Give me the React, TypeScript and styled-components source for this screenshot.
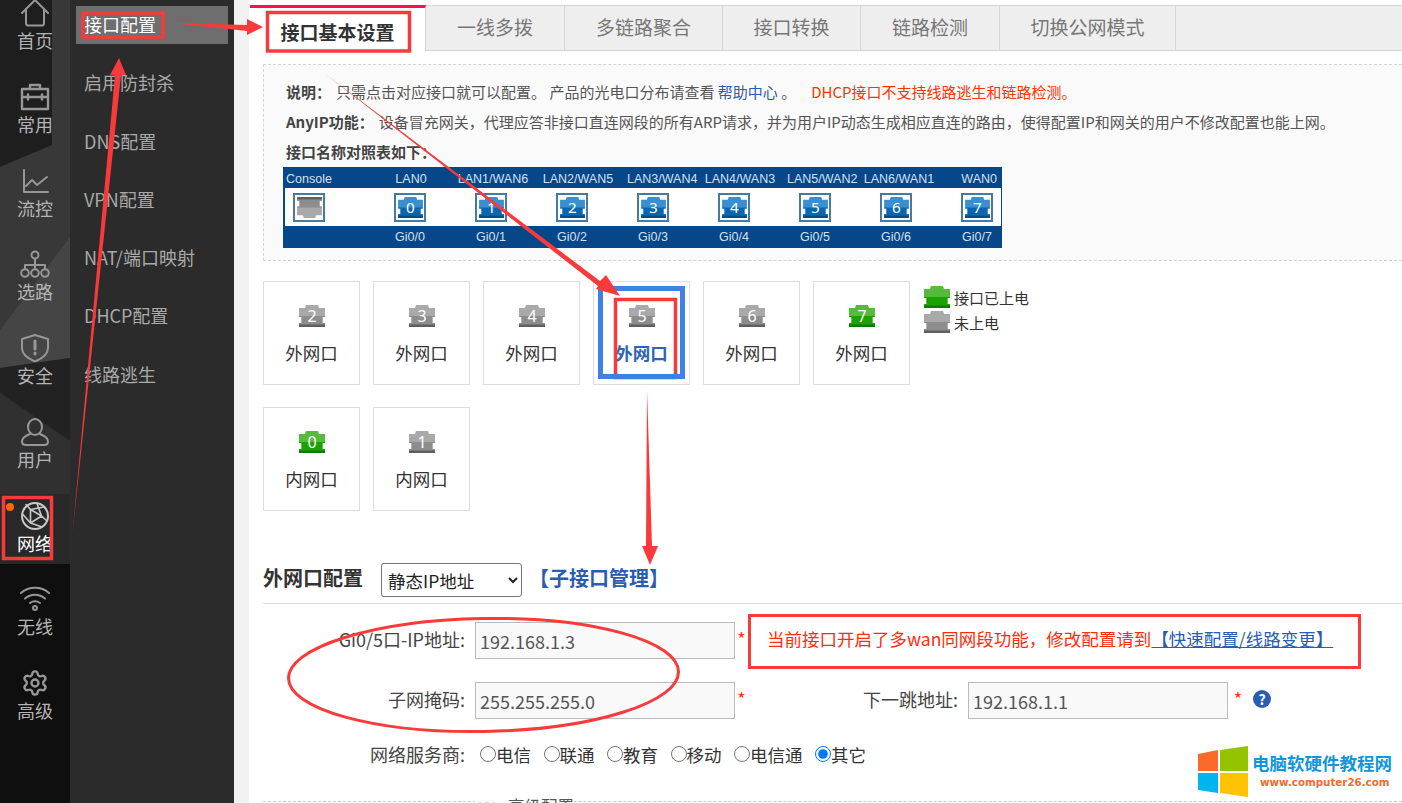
import { ReactNode } from "react";
import styled, { createGlobalStyle } from "styled-components";
import { Settings } from "lucide-react";

const FONT = `"Noto Sans CJK SC", "Noto Sans", sans-serif`;
const RED = "#f83a3a";

const Global = createGlobalStyle`
  html, body { margin: 0; padding: 0; background: #fff; }
  body { font-family: ${FONT}; color: #333; }
  * { box-sizing: border-box; }
`;

const Page = styled.div`
  position: relative;
  display: flex;
  width: 1402px;
  height: 803px;
  overflow: hidden;
`;

/* ---------- icon rail ---------- */
const Rail = styled.nav`
  position: relative;
  flex: 0 0 70px;
  height: 803px;
  background: #0f0f0f;
`;

const RailArt = styled.svg`
  position: absolute;
  inset: 0;
`;

const RailList = styled.ul`
  position: relative;
  display: flex;
  flex-direction: column;
  gap: 13.75px;
  margin: -9px 0 0;
  padding: 0;
  list-style: none;
`;

const RailItem = styled.li<{ $active?: boolean }>`
  position: relative;
  display: flex;
  flex-direction: column;
  align-items: center;
  height: 70px;
  padding-top: 8px;
  color: ${(p) => (p.$active ? "#fff" : "#b4b4b4")};
  background: ${(p) => (p.$active ? "#282828" : "transparent")};
  svg {
    width: 30px;
    height: 28px;
    fill: none;
    stroke: ${(p) => (p.$active ? "#c8c8c8" : "#979797")};
    stroke-width: 2;
    stroke-linecap: round;
    stroke-linejoin: round;
  }
`;

const RailText = styled.span`
  margin-top: -1px;
  font-size: 18px;
  line-height: 28px;
`;

const Dot = styled.i`
  position: absolute;
  left: 6px;
  top: 9px;
  width: 8px;
  height: 8px;
  border-radius: 50%;
  background: #f60;
`;

/* ---------- sub menu ---------- */
const SubMenu = styled.ul`
  display: flex;
  flex: 0 0 164px;
  flex-direction: column;
  gap: 20.3px;
  margin: 0;
  padding: 6px 6px 0;
  list-style: none;
  background: #2b2b2b;
`;

const SubItem = styled.li<{ $active?: boolean }>`
  height: 38px;
  padding-left: 8px;
  font-size: 18px;
  line-height: 36px;
  white-space: nowrap;
  color: ${(p) => (p.$active ? "#fff" : "#a9a9a9")};
  background: ${(p) => (p.$active ? "#6e6e6e" : "transparent")};
`;

/* ---------- main column ---------- */
const Main = styled.main`
  flex: 1;
  min-width: 0;
  padding-left: 15px;
  background: #f2f2f2;
`;

const Content = styled.div`
  height: 803px;
  padding-top: 5px;
  background: #fff;
`;

const TabBar = styled.div`
  display: flex;
  height: 46px;
  margin-left: 1px;
  background: #eee;
  border-top: 1px solid #d5d5d5;
  border-bottom: 1px solid #d5d5d5;
`;

const Tab = styled.div<{ $w: number; $active?: boolean }>`
  flex: 0 0 ${(p) => p.$w}px;
  margin-top: ${(p) => (p.$active ? "-1px" : "0")};
  height: ${(p) => (p.$active ? "46px" : "44px")};
  padding-top: ${(p) => (p.$active ? "6px" : "0")};
  font-size: 19px;
  line-height: ${(p) => (p.$active ? "36px" : "42px")};
  font-weight: ${(p) => (p.$active ? 700 : 400)};
  text-align: center;
  color: ${(p) => (p.$active ? "#333" : "#777")};
  background: ${(p) => (p.$active ? "#fff" : "transparent")};
  border-right: 1px solid #d5d5d5;
  border-top: ${(p) => (p.$active ? "3px solid #ff0f50" : "none")};
`;

const Info = styled.section`
  height: 197px;
  margin: 13px 0 0 14px;
  padding: 12px 0 0 22px;
  background: #fafafa;
  border: 1px dashed #d4d4d4;
  border-right: none;
  font-size: 15px;
  line-height: 30px;
  color: #555;
  white-space: nowrap;
`;

const Strong = styled.b`
  margin-right: 5px;
  color: #444;
`;

const InfoLink = styled.a`
  color: #2a5db0;
`;

const InfoWarn = styled.span`
  margin-left: 15px;
  color: #ff3300;
`;

/* ---------- port legend table ---------- */
const PortTable = styled.div`
  width: 719px;
  height: 81px;
  margin-left: -3px;
  padding: 0;
  background: #06478a;
  color: #d5e0ec;
  font-family: "Liberation Sans", sans-serif;
  font-size: 12.5px;
`;

const HeadRow = styled.div`
  display: grid;
  grid-template-columns: 85px 86px 78px 92px 72px 88px 72px 86px 60px;
  height: 21px;
  line-height: 24px;
  text-align: center;
`;

const HeadCell = styled.span<{ $align?: string }>`
  text-align: ${(p) => p.$align || "center"};
  padding: 0 ${(p) => (p.$align === "right" ? "5px" : "3px")};
  white-space: nowrap;
`;

const CellRow = styled.div<{ $white?: boolean }>`
  display: flex;
  align-items: center;
  margin: 0 1px 0 ${(p) => (p.$white ? "2px" : "0")};
  height: ${(p) => (p.$white ? "38px" : "22px")};
  padding-left: ${(p) => (p.$white ? "8px" : "10px")};
  background: ${(p) => (p.$white ? "#fff" : "transparent")};
  line-height: 26px;
`;

const Cell = styled.div<{ $first?: boolean }>`
  flex: 0 0 32px;
  margin-left: ${(p) => (p.$first ? "0" : "49px")};
  text-align: center;
  white-space: nowrap;
  &:nth-child(2) {
    margin-left: 69px;
  }
`;

const PortFrame = styled.div`
  display: flex;
  align-items: center;
  justify-content: center;
  width: 32px;
  height: 29px;
  background: #fff;
  border: 2px solid #447ba5;
`;

/* ---------- port cards ---------- */
const CardArea = styled.div`
  display: flex;
  margin: 20px 0 0 14px;
`;

const CardGrid = styled.div`
  display: grid;
  grid-template-columns: repeat(6, 97px);
  grid-auto-rows: 104px;
  gap: 22px 13px;
`;

const Card = styled.div<{ $active?: boolean }>`
  display: flex;
  flex-direction: column;
  align-items: center;
  padding-top: 23px;
  border: 1px solid #ddd;
  font-size: 17.5px;
  font-weight: ${(p) => (p.$active ? 700 : 400)};
  color: ${(p) => (p.$active ? "#2f63b5" : "#333")};
`;

const CardText = styled.span`
  margin-top: 11px;
  line-height: 30px;
`;

const Legend = styled.div`
  display: flex;
  flex-direction: column;
  gap: 3px;
  margin: 5px 0 0 14px;
`;

const LegendRow = styled.div`
  display: flex;
  align-items: center;
  gap: 4px;
  height: 22px;
  font-size: 15px;
`;

/* ---------- form ---------- */
const SectionHead = styled.div`
  display: flex;
  align-items: center;
  height: 41px;
  margin: 52px 0 0 14px;
  padding-bottom: 6px;
  border-bottom: 1px solid #ddd;
`;

const SectionTitle = styled.h2`
  margin: 0 18px 0 0;
  padding-bottom: 5px;
  font-size: 20px;
  font-weight: 700;
  color: #333;
`;

const ModeSelect = styled.select`
  width: 141px;
  height: 34px;
  margin-right: 7px;
  padding-left: 2px;
  background: #fff;
  border: 1px solid #767676;
  border-radius: 3px;
  font-family: ${FONT};
  font-size: 17.5px;
  color: #222;
`;

const SubLink = styled.a`
  padding-bottom: 5px;
  font-size: 20px;
  font-weight: 700;
  color: #2a5db0;
`;

const Row = styled.div<{ $top: number }>`
  display: flex;
  align-items: center;
  height: 37px;
  margin: ${(p) => p.$top}px 0 0 14px;
  font-size: 17.5px;
`;

const Label = styled.label<{ $w: number }>`
  flex: 0 0 ${(p) => p.$w}px;
  margin-right: 10px;
  padding-bottom: 3px;
  font-size: 18px;
  text-align: right;
  white-space: nowrap;
  color: #444;
`;

const Field = styled.input`
  flex: 0 0 260px;
  height: 37px;
  padding: 0 4px;
  background: #f9f9f9;
  border: 1px solid #bbb;
  font-family: ${FONT};
  font-size: 18px;
  color: #555;
`;

const Star = styled.span<{ $w: number }>`
  flex: 0 0 ${(p) => p.$w}px;
  padding-bottom: 5px;
  text-align: center;
  color: #ff3300;
  font-size: 18px;
`;

const Notice = styled.div`
  flex: 0 0 613px;
  height: 55px;
  margin: 2px 0 0;
  padding: 0 0 6px 16px;
  display: flex;
  align-items: center;
  border: 3.5px solid ${RED};
  color: #ff2d0c;
  white-space: nowrap;
`;

const NoticeLink = styled.a`
  color: #2a5db0;
  text-decoration: underline;
`;

const Help = styled.span`
  flex: 0 0 18px;
  height: 18px;
  margin: 0 0 3px 5px;
  border-radius: 50%;
  background: #2a5db0;
  color: #fff;
  font-size: 14px;
  font-weight: 700;
  line-height: 18px;
  text-align: center;
`;

const RadioGroup = styled.div`
  display: flex;
  gap: 12.5px;
  margin-left: 5px;
  padding-bottom: 3px;
`;

const RadioLabel = styled.label`
  display: flex;
  align-items: center;
  white-space: nowrap;
  input {
    width: 16px;
    height: 16px;
    margin: 0;
    accent-color: #0075ff;
  }
`;

const Fold = styled.div`
  display: flex;
  height: 20px;
  margin: 27px 0 0 14px;
  padding-left: 212px;
  border-top: 1px dashed #ccc;
`;

const FoldText = styled.span`
  display: flex;
  align-items: center;
  gap: 12px;
  height: 20px;
  margin-top: -6px;
  padding-left: 3px;
  font-size: 16.5px;
  color: #555;
  background: #fff;
  svg {
    margin-top: 6px;
  }
`;

/* ---------- things lying over the page ---------- */
const Marks = styled.svg`
  position: absolute;
  inset: 0;
  z-index: 5;
  pointer-events: none;
`;

const Watermark = styled.div`
  position: absolute;
  left: 1198px;
  top: 746px;
  z-index: 6;
  display: flex;
  gap: 4px;
  height: 51px;
  svg {
    flex: none;
  }
`;

const MarkText = styled.div`
  display: flex;
  flex-direction: column;
  padding-top: 6px;
`;

const MarkName = styled.span`
  font-size: 17.5px;
  font-weight: 700;
  line-height: 22px;
  color: #1296db;
  white-space: nowrap;
`;

const MarkUrl = styled.span`
  margin: -1px 0 0 8px;
  font-family: "DejaVu Sans", sans-serif;
  font-size: 10.3px;
  font-weight: 700;
  line-height: 18px;
  color: #f26a2e;
  white-space: nowrap;
`;

type Tone = "gray" | "green" | "blue";

const TONES: Record<Tone, [string, string, string]> = {
  gray: ["#a9a9a9", "#8d8d8d", "#5f5f5f"],
  green: ["#56bb3c", "#1aa200", "#0f7c00"],
  blue: ["#3a8fd0", "#0a66ae", "#074d86"],
};

function Jack({
  tone,
  digit,
  w = 26,
  h = 22,
  flip,
}: {
  tone: Tone;
  digit?: string;
  w?: number;
  h?: number;
  flip?: boolean;
}) {
  const [a, b, c] = TONES[tone];
  return (
    <svg width={w} height={h} viewBox="0 0 26 22">
      <g transform={flip ? "rotate(180 13 11)" : undefined}>
        <path
          d="M7 0H19L20 3H26V12H23.5V18H26V22H0V18H2.5V12H0V3H6Z"
          fill={a}
        />
        <path d="M0 11H26V12H23.5V18H26V20H0V18H2.5V12H0Z" fill={b} />
        <path d="M0 19.5H26V22H0Z" fill={c} />
      </g>
      {digit && (
        <text
          x="13"
          y="16.5"
          textAnchor="middle"
          fontSize="16"
          fontWeight="400"
          fontFamily="Noto Sans, sans-serif"
          fill="#fff"
        >
          {digit}
        </text>
      )}
    </svg>
  );
}

const railItems: { label: string; icon: ReactNode; active?: boolean }[] = [
  {
    label: "首页",
    icon: (
      <svg viewBox="0 0 30 28">
        <path d="M2 14L15 1L28 14M6 11V24Q6 26.500 8 26.500H22Q24 26.500 24 24V11" />
      </svg>
    ),
  },
  {
    label: "常用",
    icon: (
      <svg viewBox="0 0 30 28">
        <path d="M2 6H28V26H2ZM10 6V2H20V6M2 14H28M8 11.500V16.500M22 11.500V16.500" strokeWidth="2.400" />
      </svg>
    ),
  },
  {
    label: "流控",
    icon: (
      <svg viewBox="0 0 30 28">
        <path d="M4 3V25H28M6 19L12 13L17 18L27 10" />
      </svg>
    ),
  },
  {
    label: "选路",
    icon: (
      <svg viewBox="0 0 30 28">
        <circle cx="15" cy="5" r="3.500" />
        <path d="M15 9V15M5 19V15H25V19M15 15V19" />
        <circle cx="5" cy="23" r="3.800" />
        <circle cx="15" cy="23" r="3.800" />
        <circle cx="25" cy="23" r="3.800" />
      </svg>
    ),
  },
  {
    label: "安全",
    icon: (
      <svg viewBox="0 0 30 28">
        <path d="M15 1L28 5V14C28 21 21 25 15 27.500C9 25 2 21 2 14V5Z" />
        <path d="M15 7V15M15 19V20" strokeWidth="3" />
      </svg>
    ),
  },
  {
    label: "用户",
    icon: (
      <svg viewBox="0 0 30 28">
        <ellipse cx="15" cy="9" rx="7" ry="8" />
        <path d="M10 16C5 18 2 20 2 23.500C2 26 4 27 6 27H24C26 27 28 26 28 23.500C28 20 25 18 20 16" />
      </svg>
    ),
  },
  {
    label: "网络",
    active: true,
    icon: (
      <svg viewBox="0 0 30 28">
        <circle cx="15" cy="14" r="13" />
        <path d="M10.500 7.500L21.500 14L10.500 21ZM10.500 7.500L6 2.500M10.500 7.500L24 5M21.500 14L27 19M21.500 14L17 1.500M10.500 21L2.500 12M10.500 21L22 25" strokeWidth="1.600" />
      </svg>
    ),
  },
  {
    label: "无线",
    icon: (
      <svg viewBox="0 0 30 28">
        <path d="M1 8C9 1 21 1 29 8M5 13.500C11 8.500 19 8.500 25 13.500M10 18C13 16 17 16 20 18" />
        <circle cx="15" cy="23" r="2" />
      </svg>
    ),
  },
  { label: "高级", icon: <Settings strokeWidth={1.800} /> },
];

const subItems = [
  "接口配置",
  "启用防封杀",
  "DNS配置",
  "VPN配置",
  "NAT/端口映射",
  "DHCP配置",
  "线路逃生",
];

const tabs: [string, number][] = [
  ["一线多拨", 139],
  ["多链路聚合", 158],
  ["接口转换", 138],
  ["链路检测", 139],
  ["切换公网模式", 176],
];

const heads = [
  "LAN0",
  "LAN1/WAN6",
  "LAN2/WAN5",
  "LAN3/WAN4",
  "LAN4/WAN3",
  "LAN5/WAN2",
  "LAN6/WAN1",
];

const cards: { digit: string; tone: Tone; label: string; active?: boolean }[] = [
  { digit: "2", tone: "gray", label: "外网口" },
  { digit: "3", tone: "gray", label: "外网口" },
  { digit: "4", tone: "gray", label: "外网口" },
  { digit: "5", tone: "gray", label: "外网口", active: true },
  { digit: "6", tone: "gray", label: "外网口" },
  { digit: "7", tone: "green", label: "外网口" },
  { digit: "0", tone: "green", label: "内网口" },
  { digit: "1", tone: "gray", label: "内网口" },
];

const isps = ["电信", "联通", "教育", "移动", "电信通", "其它"];

export default function App() {
  const gis = ["0", "1", "2", "3", "4", "5", "6", "7"];
  return (
    <Page>
      <Global />
      <Rail>
        <RailArt width="70" height="803" viewBox="0 0 70 803">
          <rect width="70" height="494" fill="#303030" />
          <path d="M0 0H52V145L0 167Z" fill="#1e1e1e" />
          <path d="M0 167L52 145V0H70V237L0 330Z" fill="#383838" />
          <path d="M0 330L70 237V358L0 368Z" fill="#454545" />
          <path d="M0 368L70 358V441L0 393Z" fill="#222" />
          <path d="M0 393L70 441V494H0Z" fill="#303030" />
        </RailArt>
        <RailList>
          {railItems.map((item) => (
            <RailItem key={item.label} $active={item.active}>
              {item.active && <Dot />}
              {item.icon}
              <RailText>{item.label}</RailText>
            </RailItem>
          ))}
        </RailList>
      </Rail>

      <SubMenu>
        {subItems.map((s, i) => (
          <SubItem key={s} $active={i === 0}>
            {s}
          </SubItem>
        ))}
      </SubMenu>

      <Main>
        <Content>
          <TabBar>
            <Tab $w={176} $active>
              接口基本设置
            </Tab>
            {tabs.map(([t, w]) => (
              <Tab key={t} $w={w}>
                {t}
              </Tab>
            ))}
          </TabBar>

          <Info>
            <div>
              <Strong>说明：</Strong>只需点击对应接口就可以配置。 产品的光电口分布请查看{" "}
              <InfoLink>帮助中心</InfoLink> 。
              <InfoWarn>DHCP接口不支持线路逃生和链路检测。</InfoWarn>
            </div>
            <div>
              <Strong>AnyIP功能：</Strong>
              设备冒充网关，代理应答非接口直连网段的所有ARP请求，并为用户IP动态生成相应直连的路由，使得配置IP和网关的用户不修改配置也能上网。
            </div>
            <div>
              <Strong>接口名称对照表如下：</Strong>
            </div>
            <PortTable>
              <HeadRow>
                <HeadCell $align="left">Console</HeadCell>
                {heads.map((h) => (
                  <HeadCell key={h}>{h}</HeadCell>
                ))}
                <HeadCell $align="right">WAN0</HeadCell>
              </HeadRow>
              <CellRow $white>
                <Cell $first>
                  <PortFrame>
                    <Jack tone="gray" flip w={25} h={21} />
                  </PortFrame>
                </Cell>
                {gis.map((g) => (
                  <Cell key={g}>
                    <PortFrame>
                      <Jack tone="blue" digit={g} w={25} h={21} />
                    </PortFrame>
                  </Cell>
                ))}
              </CellRow>
              <CellRow>
                <Cell $first />
                {gis.map((g) => (
                  <Cell key={g}>Gi0/{g}</Cell>
                ))}
              </CellRow>
            </PortTable>
          </Info>

          <CardArea>
            <CardGrid>
              {cards.map((c) => (
                <Card key={c.digit} $active={c.active}>
                  <Jack tone={c.tone} digit={c.digit} />
                  <CardText>{c.label}</CardText>
                </Card>
              ))}
            </CardGrid>
            <Legend>
              <LegendRow>
                <Jack tone="green" />
                接口已上电
              </LegendRow>
              <LegendRow>
                <Jack tone="gray" />
                未上电
              </LegendRow>
            </Legend>
          </CardArea>

          <SectionHead>
            <SectionTitle>外网口配置</SectionTitle>
            <ModeSelect defaultValue="static">
              <option value="static">静态IP地址</option>
            </ModeSelect>
            <SubLink>【子接口管理】</SubLink>
          </SectionHead>

          <Row $top={18}>
            <Label $w={202}>Gi0/5口-IP地址:</Label>
            <Field defaultValue="192.168.1.3" />
            <Star $w={13}>*</Star>
            <Notice>
              当前接口开启了多wan同网段功能，修改配置请到
              <NoticeLink>【快速配置/线路变更】</NoticeLink>
            </Notice>
          </Row>

          <Row $top={23}>
            <Label $w={202}>子网掩码:</Label>
            <Field defaultValue="255.255.255.0" />
            <Star $w={13}>*</Star>
            <Label $w={210}>下一跳地址:</Label>
            <Field defaultValue="192.168.1.1" />
            <Star $w={20}>*</Star>
            <Help>?</Help>
          </Row>

          <Row $top={18}>
            <Label $w={202}>网络服务商:</Label>
            <RadioGroup>
              {isps.map((s) => (
                <RadioLabel key={s}>
                  <input type="radio" name="isp" defaultChecked={s === "其它"} />
                  {s}
                </RadioLabel>
              ))}
            </RadioGroup>
          </Row>

          <Fold>
            <FoldText>
              <svg width="18" height="14" viewBox="0 0 18 14" fill="none" stroke="#f4511e" strokeWidth="3">
                <path d="M1 1L6 8L11 1M7 1L12 8L17 1" />
              </svg>
              高级配置
            </FoldText>
          </Fold>
        </Content>
      </Main>

      <Marks width="1402" height="803" viewBox="0 0 1402 803">
        <g fill="none" stroke={RED} strokeWidth="3.500">
          <rect x="3.500" y="497.500" width="48" height="61" />
          <rect x="83" y="13" width="80" height="24" />
          <rect x="267.500" y="12.500" width="142" height="38.500" />
          <rect x="615.500" y="299.500" width="60" height="78" />
          <ellipse cx="483.500" cy="675" rx="195" ry="56.500" strokeWidth="3" transform="rotate(-1 483.500 675)" />
        </g>
        <rect x="600.500" y="288.500" width="82" height="88" fill="none" stroke="#3f82e4" strokeWidth="5" />
        <g fill={RED}>
          <path d="M172 23L247 25V19L263 27L247 35V31Z" />
          <path d="M72.500 533L115 75H110L119 58L126 75H121Z" />
          <path d="M324 73L600 281L606 275L620 296L596 289L598 286Z" />
          <path d="M647 390L652 546H658L650 565L642 546H646Z" />
        </g>
      </Marks>

      <Watermark>
        <svg width="50" height="51" viewBox="0 0 50 51">
          <path d="M0 8L20 4V25H0Z" fill="#f96a2b" />
          <path d="M22 4L50 0V25H22Z" fill="#94c300" />
          <path d="M0 27H20V47L0 44Z" fill="#00b4f0" />
          <path d="M22 27H50V51L22 47Z" fill="#fdc300" />
        </svg>
        <MarkText>
          <MarkName>电脑软硬件教程网</MarkName>
          <MarkUrl>www.computer26.com</MarkUrl>
        </MarkText>
      </Watermark>
    </Page>
  );
}
